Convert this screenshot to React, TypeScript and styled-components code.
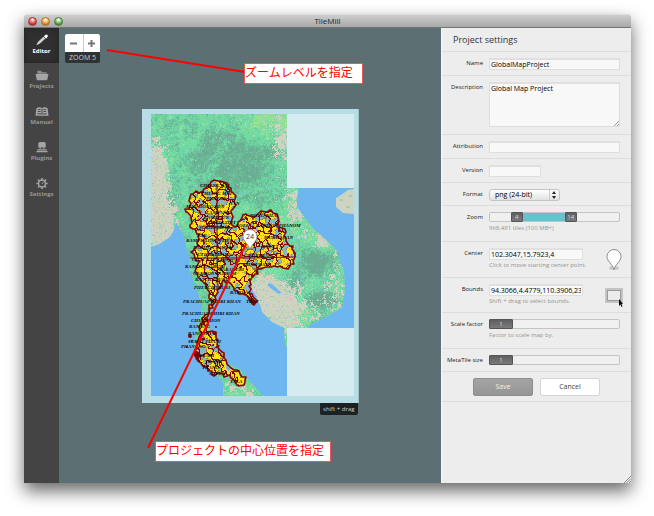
import React, { useState } from "react";
import styled, { createGlobalStyle, css } from "styled-components";

const GlobalStyle = createGlobalStyle`
  *, *::before, *::after { box-sizing: border-box; }
  html, body { margin: 0; background: #fff; }
  body, button, input, select, textarea { font-family: "Open Sans", "Noto Sans", sans-serif; }
`;

/* ---------- map drawing ---------- */

type Point = [number, number];

const MAP = { left: 151, top: 114, right: 354, bottom: 396 };

const parse = (s: string): Point[] =>
  s.trim().split(/\s+/).map((p) => p.split(",").map(Number) as Point);

const WEST_SEA = "151,247 157,245 163,242 170,237 174,230 176,223 178,226 182,232 185,240 187,250 190,260 189,270 193,280 197,287 199,297 202,305 201,313 198,323 195,337 194,347 197,357 207,367 217,376 223,382 223,396 151,396";
const GULF = "220,284 229,288 236,291 246,294 252,290 255,294 260,305 262,312 267,317 272,322 278,325 284,328 285,347 287,347 287,396 264,396 255,387 247,378 240,369 227,363 220,347 210,330 207,317 212,307 216,298";
const EAST_SEA = "299,188 297,197 297,207 303,215 312,227 323,237 335,248 339,255 340,262 344,270 345,290 342,308 330,315 320,320 310,325 308,328 354,328 354,188";
const HAINAN = "354,189 348,190 341,195 336,198 336,207 343,213 354,214";
const COUNTRY_POINTS = "210,184 218,181 228,184 231,191 236,196 235,204 231,211 233,217 231,224 235,227 238,222 246,214 253,219 261,211 270,210 278,217 278,227 285,229 286,241 293,246 294,264 288,269 278,267 261,269 255,274 250,281 249,293 256,300 254,305 246,295 234,290 229,282 224,280 217,290 216,300 209,312 207,320 206,330 216,335 217,345 226,360 234,370 246,377 244,385 237,385 231,378 220,373 214,376 207,367 196,358 197,345 202,333 199,327 204,317 211,305 209,295 206,285 198,277 195,271 200,261 191,252 198,246 200,234 190,227 191,216 185,209 190,206 191,194 203,191";

const inside = (x: number, y: number, poly: Point[]) => {
  let hit = false;
  for (let i = 0, j = poly.length - 1; i < poly.length; j = i++) {
    const [xi, yi] = poly[i];
    const [xj, yj] = poly[j];
    if (yi > y !== yj > y && x < ((xj - xi) * (y - yi)) / (yj - yi) + xi) hit = !hit;
  }
  return hit;
};

const hash = (x: number, y: number, seed: number) => {
  let h = Math.imul(x | 0, 374761393) + Math.imul(y | 0, 668265263) + Math.imul(seed, 1442695041);
  h = Math.imul(h ^ (h >>> 13), 1274126177);
  return ((h ^ (h >>> 16)) >>> 0) / 4294967296;
};

const noise = (x: number, y: number, scale: number, seed: number) => {
  const gx = Math.floor(x / scale);
  const gy = Math.floor(y / scale);
  const fx = x / scale - gx;
  const fy = y / scale - gy;
  const top = hash(gx, gy, seed) * (1 - fx) + hash(gx + 1, gy, seed) * fx;
  const low = hash(gx, gy + 1, seed) * (1 - fx) + hash(gx + 1, gy + 1, seed) * fx;
  return top * (1 - fy) + low * fy;
};

/* Splits every edge of an outline and nudges the new points, for a ragged border. */
const ragged = (points: Point[]): Point[] =>
  points.flatMap(([x, y], i) => {
    const [nx, ny] = points[(i + 1) % points.length];
    const steps = Math.max(1, Math.round(Math.hypot(nx - x, ny - y) / 3));
    return Array.from({ length: steps }, (_, k): Point => [
      Math.round(x + ((nx - x) * k) / steps + (k ? (hash(i, k, 51) - 0.5) * 4 : 0)),
      Math.round(y + ((ny - y) * k) / steps + (k ? (hash(i, k, 52) - 0.5) * 4 : 0)),
    ]);
  });

const COUNTRY = ragged(parse(COUNTRY_POINTS));

const blob = (x: number, y: number, cx: number, cy: number, rx: number, ry: number) =>
  Math.exp(-(((x - cx) / rx) ** 2) - ((y - cy) / ry) ** 2);

const terrainColour = (x: number, y: number) => {
  const dry =
    blob(x, y, 153, 178, 14, 32) * 1.5 +
    blob(x, y, 158, 224, 18, 22) * 1.4 +
    blob(x, y, 283, 140, 13, 34) * 0.6 +
    blob(x, y, 294, 206, 12, 24) * 0.7 +
    blob(x, y, 284, 308, 28, 26) * 1.1 +
    blob(x, y, 262, 288, 16, 18) * 0.8 +
    blob(x, y, 338, 290, 14, 40) * 0.5 +
    blob(x, y, 310, 240, 24, 12) * 0.3 +
    blob(x, y, 323, 240, 10, 10) * 0.5 +
    blob(x, y, 240, 388, 24, 16) * 0.5 + 0.06;
  const dark =
    blob(x, y, 228, 145, 50, 34) * 0.12 +
    blob(x, y, 250, 166, 26, 28) * 0.24 +
    blob(x, y, 205, 170, 28, 26) * 0.1 +
    blob(x, y, 316, 262, 14, 12) * 0.6 +
    blob(x, y, 320, 299, 18, 7) * 0.6 +
    blob(x, y, 294, 283, 6, 12) * 0.5 +
    blob(x, y, 267, 309, 6, 10) * 0.5 +
    blob(x, y, 168, 210, 7, 24) * 0.3;
  const bright = blob(x, y, 262, 120, 34, 14) * 0.35;
  const broad = noise(x + y * 0.4, y, 9, 3);
  const fine = noise(x, y, 3, 5);
  const small = noise(x, y, 2, 6);
  const speck = hash(x, y, 7);
  if (dry + (fine - 0.5) * 0.7 + (speck - 0.5) * 0.4 + (broad - 0.5) * 0.3 > 0.56) {
    return speck > 0.96 ? "#9dbcd6" : speck > 0.8 ? "#b6d3b0" : "#d0d3c1";
  }
  if (speck > 0.992) return "#78b8dc";
  const v = broad * 0.3 + fine * 0.3 + small * 0.2 + speck * 0.25 + dark - bright;
  if (v > 0.8) return "#69ae92";
  if (v > 0.68) return "#6cb997";
  if (v > 0.58) return "#6dc99c";
  if (v > 0.4) return "#70daa6";
  if (v > 0.32) return "#7edb93";
  return speck > 0.35 ? "#8be288" : "#a4dcae";
};

const buildRaster = () => {
  const paths: Record<string, string> = {};
  const seeds: Point[] = [];
  for (let gy = 178; gy < 392; gy += 11) {
    for (let gx = 182; gx < 300; gx += 11) {
      seeds.push([gx + hash(gx, gy, 21) * 11, gy + hash(gx, gy, 22) * 11]);
    }
  }
  const cell = (x: number, y: number) => {
    const wx = x + (noise(x, y, 3, 31) - 0.5) * 7;
    const wy = y + (noise(x, y, 3, 32) - 0.5) * 7;
    let best = 0;
    let dist = 1e9;
    seeds.forEach(([sx, sy], i) => {
      const d = (sx - wx) ** 2 + (sy - wy) ** 2;
      if (d < dist) {
        dist = d;
        best = i;
      }
    });
    return best;
  };
  for (let y = MAP.top; y < MAP.bottom; y++) {
    let start = MAP.left;
    let current = "";
    for (let x = MAP.left; x <= MAP.right; x++) {
      let colour = "";
      if (x < MAP.right) {
        const near = x > 180 && x < 300 && y > 178 && y < 390;
        if (near && inside(x + 0.5, y + 0.5, COUNTRY)) {
          const c = cell(x, y);
          const edge = c !== cell(x + 1, y) || c !== cell(x, y + 1);
          const patch = noise(x, y, 4, 41) + (x < 236 && y < 300 ? 0.06 : 0);
          colour = "c:" + (edge ? "#7c0808" : patch > 0.64 ? "#86b6c0" : patch > 0.59 ? "#a07a38" : hash(x, y, 9) > 0.85 ? "#e8b414" : "#ffe312");
        } else {
          colour = "t:" + terrainColour(x, y);
        }
      }
      if (colour !== current) {
        if (current) paths[current] = (paths[current] || "") + `M${start} ${y}h${x - start}v1h${start - x}z`;
        start = x;
        current = colour;
      }
    }
  }
  return Object.entries(paths).map(([key, d]) => ({ layer: key[0], fill: key.slice(2), d }));
};

const RASTER = buildRaster();

const PLACES: [string, number, number][] = [
  ["CHIANG RAI", 200, 187], ["CHIANG MAI", 201, 195], ["PHAYAO", 206, 200], ["MAE HONG SON", 186, 208],
  ["NAN", 229, 205], ["LAMPANG", 206, 214], ["LAMPHUN", 204, 219], ["UTTARADIT", 208, 224],
  ["SUKHOTHAI", 199, 229], ["TAK", 197, 237], ["KAMPHAENG PHET", 186, 242], ["NAKHON SAWAN", 193, 249],
  ["UTHAI THANI", 197, 256], ["CHAI NAT", 192, 261], ["KANCHANABURI", 185, 268], ["NAKHON PATHOM", 193, 275],
  ["RATCHABURI", 195, 281], ["PHETCHABURI", 194, 289], ["RAYONG", 230, 294],
  ["PRACHUAP KHIRI KHAN", 183, 303], ["TRAT", 246, 303], ["PRACHUAP KHIRI KHAN", 182, 315],
  ["CHUMPHON", 191, 322], ["RANONG", 189, 328], ["RANONG", 188, 335], ["SURAT THANI", 188, 343],
  ["PHANGNGA", 181, 348], ["KRABI", 199, 357], ["TRANG", 205, 363], ["TRANG", 202, 369],
  ["SATUN", 209, 375], ["YALA", 230, 383], ["NONG KHAI", 250, 217], ["LOEI", 236, 227],
  ["NAKHON PHANOM", 256, 227], ["MUKDAHAN", 264, 239], ["ROI ET", 262, 248], ["BURI RAM", 248, 257],
  ["BURI RAM", 245, 266], ["LOP BURI", 217, 262], ["SARABURI", 219, 271],
];

const MapDrawing = () => (
  <svg viewBox="142 109 217 294" width="217" height="294" role="img" aria-label="Map preview">
    <rect x="142" y="109" width="217" height="294" fill="#b9dde4" />
    <g shapeRendering="crispEdges">
      {RASTER.filter((r) => r.layer === "t").map((r) => <path key={r.fill} d={r.d} fill={r.fill} />)}
    </g>
    <g fill="#6db6ef">
      <polygon points={WEST_SEA} />
      <polygon points={GULF} />
      <polygon points={EAST_SEA} />
      <path d="M268 283l4 1 4 4 5 4-2 2-6-4-5-4z" />
    </g>
    <polygon points={HAINAN} fill="#cfd4c2" />
    <path d="M340 199h3v2h-3zM346 206h4v2h-4zM349 195h3v2h-3z" fill="#a5cfab" />
    <path d="M296 236l4 14-2 10 3 12-1 14" fill="none" stroke="#7bb9d5" strokeWidth="1" strokeDasharray="3 2" />
    <path d="M166 158l3 20 2 16 5 12" fill="none" stroke="#c4dcc0" strokeWidth="2" strokeDasharray="2 2" />
    <g shapeRendering="crispEdges">
      {RASTER.filter((r) => r.layer === "c").map((r) => <path key={r.fill} d={r.d} fill={r.fill} />)}
    </g>
    <polygon points={COUNTRY.map((p) => p.join(",")).join(" ")} fill="none" stroke="#7c0808" strokeWidth="1.600" strokeLinejoin="round" />
    <path d="M217 184v72l1 32M190 258h62l42-1M203 226l30 2" fill="none" stroke="#7c0808" strokeWidth="1" />
    <g fill="#7c0808">
      <circle cx="190" cy="336" r="2" /><circle cx="216" cy="327" r="1" /><circle cx="215" cy="333" r="2" />
      <circle cx="192" cy="341" r="1" /><circle cx="187" cy="347" r="1" /><circle cx="253" cy="303" r="2" />
      <path d="M194 349l6 4-1 9-5-6zM246 294l7 6 1 6-5-5z" />
    </g>
    <g fill="#d4ecf0">
      <rect x="287" y="114" width="67" height="74" />
      <rect x="287" y="328" width="67" height="68" />
    </g>
    <g fontFamily="Liberation Serif, serif" fontSize="5" fontWeight="700" fontStyle="italic" fill="#0b0808">
      {PLACES.map(([name, x, y], i) => <text key={i} x={x} y={y}>{name}</text>)}
    </g>
    <path d="M358.500 109v294" stroke="#9cc3ca" />
  </svg>
);

const PinShape = ({ text }: { text?: string }) => (
  <svg width="16" height="22" viewBox="0 0 16 22" aria-hidden="true">
    <ellipse cx="8" cy="19" rx="5" ry="2" fill="#000" opacity="0.15" />
    <path d="M8 20.500C6.500 15 1 12.500 1 7.500a7 7 0 0 1 14 0c0 5-5.500 7.500-7 13z" fill="#fff" stroke="#8d8d8d" strokeWidth="1" />
    {text && <text x="8" y="10" textAnchor="middle" fontFamily="Open Sans, sans-serif" fontSize="7" fill="#333">{text}</text>}
  </svg>
);

/* ---------- window ---------- */

const Page = styled.div`
  display: flex;
  min-height: 100vh;
  padding: 14px 23px 33px 24px;
`;
const Window = styled.div`
  flex: 1;
  min-width: 0;
  display: flex;
  flex-direction: column;
  border-radius: 3px 3px 0 0;
  box-shadow: 0 8px 17px rgba(0, 0, 0, 0.6);
`;
const TitleBar = styled.header`
  position: relative;
  display: flex;
  align-items: center;
  justify-content: center;
  height: 14px;
  border-radius: 3px 3px 0 0;
  border-top: 1px solid #dedede;
  border-bottom: 1px solid #767676;
  background: linear-gradient(#cecece, #a8a8a8);
  font-size: 8px;
  line-height: 12px;
  color: #222;
`;
const Lights = styled.div`
  position: absolute;
  left: 4px;
  top: 2px;
  display: flex;
  gap: 4px;
`;
const Light = styled.button<{ $c: string; $edge: string }>`
  width: 9px;
  height: 9px;
  padding: 0;
  border: 1px solid ${(p) => p.$edge};
  border-radius: 50%;
  background: radial-gradient(circle at 50% 25%, #fff 0, ${(p) => p.$c} 45%, ${(p) => p.$edge} 75%, ${(p) => p.$c} 100%);
`;
const Body = styled.div`
  flex: 1;
  display: flex;
`;

/* ---------- sidebar ---------- */

const Sidebar = styled.nav`
  width: 35px;
  background: #444;
  display: flex;
  flex-direction: column;
`;
const NavLink = styled.a<{ $active?: boolean }>`
  display: flex;
  flex-direction: column;
  align-items: center;
  height: 36px;
  padding-top: 6px;
  font-size: 6px;
  font-weight: 700;
  line-height: 9px;
  text-decoration: none;
  color: ${(p) => (p.$active ? "#fff" : "#969696")};
  ${(p) => p.$active && css`
    height: 35px;
    background: #303030;
    box-shadow: inset 0 0 6px #222;
  `}
`;

const icons: Record<string, React.ReactNode> = {
  Editor: (
    <>
      <path d="M1 12l1.500-3.500 6-5.500 2 2-6 5.500z" fill="#cfcfcf" />
      <path d="M9 2.500l1.500-1.500a1.600 1.600 0 0 1 2.300 2.300L11.300 5z" fill="#fff" />
    </>
  ),
  Projects: (
    <>
      <path d="M2 5V2h4l1 1.500h5V5z" fill="#8d8d8d" />
      <path d="M0 5.500h14L12.500 12h-11z" fill="#a5a5a5" />
    </>
  ),
  Manual: (
    <>
      <path d="M1 3.500C3 2 5.500 2 7 3.500 8.500 2 11 2 13 3.500l1 8H8l-1 .8-1-.8H0z" fill="#a5a5a5" />
      <path d="M2.500 5h3M2.500 7h3M8.500 5h3M8.500 7h3M7 4v7M2 9.500h4M8 9.500h4" stroke="#444" strokeWidth="1" />
    </>
  ),
  Plugins: (
    <>
      <path d="M3 2.500a2 2 0 0 1 2-1.500h4a2 2 0 0 1 2 1.500V7H9.500v2h-1V7h-3v2h-1V7H3z" fill="#a5a5a5" />
      <path d="M2 9h10v1H2zM1 10.500h12V12H1z" fill="#a5a5a5" />
    </>
  ),
  Settings: (
    <g stroke="#a5a5a5" fill="none">
      <circle cx="7" cy="7" r="3.700" strokeWidth="1.500" />
      <path d="M7 3V1M7 13v-2M3 7H1M13 7h-2M4.200 4.200L2.700 2.700M11.300 11.300L9.800 9.800M4.200 9.800l-1.500 1.500M11.300 2.700L9.800 4.200" strokeWidth="1.700" />
      <path d="M7 7.500L9 5" strokeWidth="1" />
    </g>
  ),
};

/* ---------- canvas ---------- */

const Canvas = styled.main`
  position: relative;
  flex: 1;
  min-width: 0;
  display: flex;
  align-items: center;
  justify-content: center;
  background: #5c7073;
`;
const MapFrame = styled.div`
  position: relative;
  display: flex;
`;
const DragBadge = styled.span`
  position: absolute;
  right: 1px;
  top: 100%;
  padding: 0 3px;
  border-radius: 0 0 2px 2px;
  background: #1c2223;
  color: #d0d0d0;
  font-size: 6px;
  line-height: 12px;
  white-space: nowrap;
`;
const ZoomControl = styled.div`
  position: absolute;
  left: 6px;
  top: 6px;
  width: 35px;
  border-radius: 2px;
  overflow: hidden;
  background: #2f3334;
  display: grid;
  grid-template-columns: 1fr 1fr;
`;
const ZoomButton = styled.button`
  height: 18px;
  padding: 0;
  border: 0;
  background: #fff;
  color: #666;
  display: grid;
  place-items: center;
  & + & { border-left: 1px solid #ccc; }
`;
const ZoomLabel = styled.span`
  grid-column: 1 / -1;
  text-align: center;
  font-size: 7px;
  line-height: 11px;
  color: #d0d0d0;
`;
const Note = styled.div<{ $x: number; $y: number; $w: number }>`
  position: absolute;
  left: ${(p) => p.$x}px;
  top: ${(p) => p.$y}px;
  width: ${(p) => p.$w}px;
  height: 21px;
  border: 1px solid #e25a5a;
  background: #fff;
  color: #f00;
  font-family: "Noto Sans CJK JP", sans-serif;
  font-size: 12px;
  line-height: 16px;
  white-space: nowrap;
`;
const Pointers = styled.svg`
  position: absolute;
  left: 0;
  top: 0;
  overflow: visible;
  pointer-events: none;
`;

/* ---------- settings panel ---------- */

const Panel = styled.form`
  position: relative;
  width: 190px;
  background: #ededed;
  border-left: 1px solid #f8f8f8;
  color: #444;
`;
const PanelTitle = styled.h1`
  margin: 0;
  height: 24px;
  padding: 0 11px;
  border-bottom: 1px solid #ddd;
  font-size: 9px;
  font-weight: 400;
  line-height: 23px;
  color: #333;
`;
const Row = styled.div<{ $h?: number }>`
  display: grid;
  grid-template-columns: 41px 1fr;
  column-gap: 6px;
  align-content: start;
  min-height: ${(p) => p.$h ?? 24}px;
  padding: 6px 11px 0 0;
  border-bottom: 1px solid #ddd;
`;
const Label = styled.label`
  text-align: right;
  white-space: nowrap;
  font-size: 6px;
  line-height: 11px;
  color: #222;
`;
const field = css`
  display: block;
  border: 1px solid #dedede;
  border-top: 2px solid #e0e0e0;
  border-radius: 0;
  background: #f8f8f8;
  color: #000;
  font-size: 7px;
  line-height: 9px;
  outline: 0;
`;
const TextInput = styled.input<{ $w?: number }>`
  ${field}
  width: ${(p) => (p.$w ? `${p.$w}px` : "100%")};
  height: 12px;
  padding: 0 1px;
`;
const TextArea = styled.textarea`
  ${field}
  width: 100%;
  height: 45px;
  padding: 0 1px;
  resize: none;
`;
const TextAreaWrap = styled.div`
  position: relative;
`;
const Corner = styled.svg`
  position: absolute;
  right: 1px;
  bottom: 1px;
`;
const SelectWrap = styled.div`
  position: relative;
  width: 71px;
`;
const Select = styled.select`
  appearance: none;
  display: block;
  width: 100%;
  height: 12px;
  padding: 0 5px;
  border: 1px solid #c4c4c4;
  border-radius: 3px;
  background: linear-gradient(#fff, #e2e2e2);
  color: #000;
  font-size: 7px;
  line-height: 10px;
`;
const Arrows = styled.svg`
  position: absolute;
  right: 1px;
  top: 1px;
  pointer-events: none;
`;
const Hint = styled.small`
  display: block;
  font-size: 6px;
  line-height: 10px;
  white-space: nowrap;
  color: #949494;
`;
const Track = styled.div`
  position: relative;
  height: 10px;
  margin: 0 0 1px;
  border: 1px solid #c4c4c4;
  border-radius: 2px;
  background: #f0f0f0;
`;
const Range = styled.input<{ $thumb: number }>`
  appearance: none;
  position: absolute;
  left: -1px;
  top: -1px;
  width: calc(100% + 2px);
  height: 10px;
  margin: 0;
  background: transparent;
  pointer-events: none;
  &::-webkit-slider-thumb {
    appearance: none;
    pointer-events: auto;
    width: ${(p) => p.$thumb}px;
    height: 10px;
    border: 1px solid #555;
    border-radius: 1px;
    background: linear-gradient(#5f5f5f, #7a7a7a);
  }
`;
const Fill = styled.span`
  position: absolute;
  top: 0;
  bottom: 0;
  background: #6bc0d0;
`;
const ThumbText = styled.span<{ $thumb: number }>`
  position: absolute;
  top: -1px;
  width: ${(p) => p.$thumb}px;
  text-align: center;
  font-size: 6px;
  line-height: 10px;
  color: #ddd;
  pointer-events: none;
`;
const Split = styled.div`
  display: flex;
  justify-content: space-between;
  height: 24px;
`;
const IconButton = styled.button`
  width: 18px;
  height: 24px;
  margin-right: -3px;
  padding: 0;
  border: 0;
  background: none;
  display: grid;
  place-items: center;
  flex: none;
`;
const Actions = styled.div`
  display: flex;
  justify-content: center;
  gap: 7px;
  height: 30px;
  padding-top: 6px;
  border-bottom: 1px solid #ddd;
`;
const ActionButton = styled.button<{ $primary?: boolean }>`
  width: 60px;
  height: 18px;
  padding: 0;
  border: 1px solid ${(p) => (p.$primary ? "#8e8e8e" : "#d4d4d4")};
  border-radius: 2px;
  background: ${(p) => (p.$primary ? "linear-gradient(#a5a5a5, #959595)" : "#fff")};
  color: ${(p) => (p.$primary ? "#f0f0f0" : "#444")};
  font-size: 7px;
  line-height: 14px;
`;
const Grip = styled.svg`
  position: absolute;
  right: 0;
  bottom: 0;
`;

const SingleSlider = ({ id }: { id: string }) => {
  const [value, setValue] = useState(1);
  return (
    <Track>
      <Range id={id} type="range" min={1} max={8} value={value} $thumb={24} onChange={(e) => setValue(+e.target.value)} />
      <ThumbText $thumb={24} style={{ left: `calc((100% - 22px) * ${(value - 1) / 7} - 1px)` }}>{value}</ThumbText>
    </Track>
  );
};

const ZoomSlider = () => {
  const [low, setLow] = useState(4);
  const [high, setHigh] = useState(14);
  const at = (v: number) => `calc((100% - 10px) * ${v / 22} - 1px)`;
  return (
    <Track>
      <Fill style={{ left: `${(low / 22) * 90 + 5}%`, right: `${95 - (high / 22) * 90}%` }} />
      <Range id="zoom" aria-label="Minimum zoom" type="range" max={22} value={low} $thumb={12} onChange={(e) => setLow(+e.target.value)} />
      <Range aria-label="Maximum zoom" type="range" max={22} value={high} $thumb={12} onChange={(e) => setHigh(+e.target.value)} />
      <ThumbText $thumb={12} style={{ left: at(low) }}>{low}</ThumbText>
      <ThumbText $thumb={12} style={{ left: at(high) }}>{high}</ThumbText>
    </Track>
  );
};

export default function App() {
  return (
    <Page>
      <GlobalStyle />
      <Window>
        <TitleBar>
          <Lights>
            <Light aria-label="Close" $c="#f2655c" $edge="#a5332f" />
            <Light aria-label="Minimize" $c="#f7b457" $edge="#b06f2a" />
            <Light aria-label="Zoom window" $c="#8ccb72" $edge="#477d38" />
          </Lights>
          TileMill
        </TitleBar>
        <Body>
          <Sidebar>
            {Object.keys(icons).map((name) => (
              <NavLink key={name} href="#" $active={name === "Editor"}>
                <svg width="14" height="13" viewBox="0 0 14 14" aria-hidden="true">{icons[name]}</svg>
                {name}
              </NavLink>
            ))}
          </Sidebar>
          <Canvas>
            <MapFrame>
              <MapDrawing />
              <DragBadge>shift + drag</DragBadge>
            </MapFrame>
            <ZoomControl>
              <ZoomButton type="button" aria-label="Zoom out">
                <svg width="7" height="7"><path d="M0 3.500h7" stroke="#777" strokeWidth="2" /></svg>
              </ZoomButton>
              <ZoomButton type="button" aria-label="Zoom in">
                <svg width="7" height="7"><path d="M0 3.500h7M3.500 0v7" stroke="#777" strokeWidth="2" /></svg>
              </ZoomButton>
              <ZoomLabel>ZOOM 5</ZoomLabel>
            </ZoomControl>
            <Pointers width="382" height="455" viewBox="0 0 382 455" aria-hidden="true">
              <path d="M48 22L186 44M89 420L188 214" stroke="#f00" strokeWidth="2" fill="none" />
              <g transform="translate(183 201)"><PinShape text="24" /></g>
            </Pointers>
            <Note $x={185} $y={35} $w={119}>ズームレベルを指定</Note>
            <Note $x={96} $y={413} $w={176}>プロジェクトの中心位置を指定</Note>
          </Canvas>
          <Panel onSubmit={(e) => e.preventDefault()}>
            <PanelTitle>Project settings</PanelTitle>
            <Row>
              <Label htmlFor="name">Name</Label>
              <TextInput id="name" defaultValue="GlobalMapProject" />
            </Row>
            <Row $h={59}>
              <Label htmlFor="description">Description</Label>
              <TextAreaWrap>
                <TextArea id="description" defaultValue="Global Map Project" />
                <Corner width="5" height="5"><path d="M0 5l5-5M3 5l2-2" stroke="#999" /></Corner>
              </TextAreaWrap>
            </Row>
            <Row>
              <Label htmlFor="attribution">Attribution</Label>
              <TextInput id="attribution" />
            </Row>
            <Row>
              <Label htmlFor="version">Version</Label>
              <TextInput id="version" $w={52} />
            </Row>
            <Row $h={23}>
              <Label htmlFor="format">Format</Label>
              <SelectWrap>
                <Select id="format"><option>png (24-bit)</option></Select>
                <Arrows width="10" height="10">
                  <path d="M0.500 0v10" stroke="#ccc" />
                  <path d="M3 4l2-3 2 3zM3 6l2 3 2-3z" fill="#222" />
                </Arrows>
              </SelectWrap>
            </Row>
            <Row $h={36}>
              <Label htmlFor="zoom">Zoom</Label>
              <div>
                <ZoomSlider />
                <Hint>968,481 tiles (100 MB+)</Hint>
              </div>
            </Row>
            <Row $h={36}>
              <Label htmlFor="center">Center</Label>
              <Split>
                <div>
                  <TextInput id="center" $w={94} defaultValue="102.3047,15.7923,4" />
                  <Hint>Click to move starting center point.</Hint>
                </div>
                <IconButton type="button" aria-label="Pick center"><PinShape /></IconButton>
              </Split>
            </Row>
            <Row $h={35}>
              <Label htmlFor="bounds">Bounds</Label>
              <Split>
                <div>
                  <TextInput id="bounds" $w={94} defaultValue="94.3066,4.4779,110.3906,23.4834" />
                  <Hint>Shift + drag to select bounds.</Hint>
                </div>
                <IconButton type="button" aria-label="Pick bounds">
                  <svg width="18" height="22" viewBox="0 0 18 22" aria-hidden="true">
                    <rect x="1" y="4" width="16" height="13" fill="#e8e8e8" stroke="#c4c4c4" strokeWidth="2" />
                    <rect x="2.500" y="5.500" width="13" height="10" fill="#ececec" stroke="#999" />
                    <path d="M14 14v7l1.500-1.500 1 2.500 1-.5-1-2.500H18z" fill="#000" />
                  </svg>
                </IconButton>
              </Split>
            </Row>
            <Row $h={36}>
              <Label htmlFor="scale">Scale factor</Label>
              <div>
                <SingleSlider id="scale" />
                <Hint>Factor to scale map by.</Hint>
              </div>
            </Row>
            <Row $h={23}>
              <Label htmlFor="metatile">MetaTile size</Label>
              <SingleSlider id="metatile" />
            </Row>
            <Actions>
              <ActionButton type="submit" $primary>Save</ActionButton>
              <ActionButton type="button">Cancel</ActionButton>
            </Actions>
            <Grip width="7" height="7"><path d="M0 7l7-7M2.500 7L7 2.500M5 7l2-2" stroke="#888" /></Grip>
          </Panel>
        </Body>
      </Window>
    </Page>
  );
}
